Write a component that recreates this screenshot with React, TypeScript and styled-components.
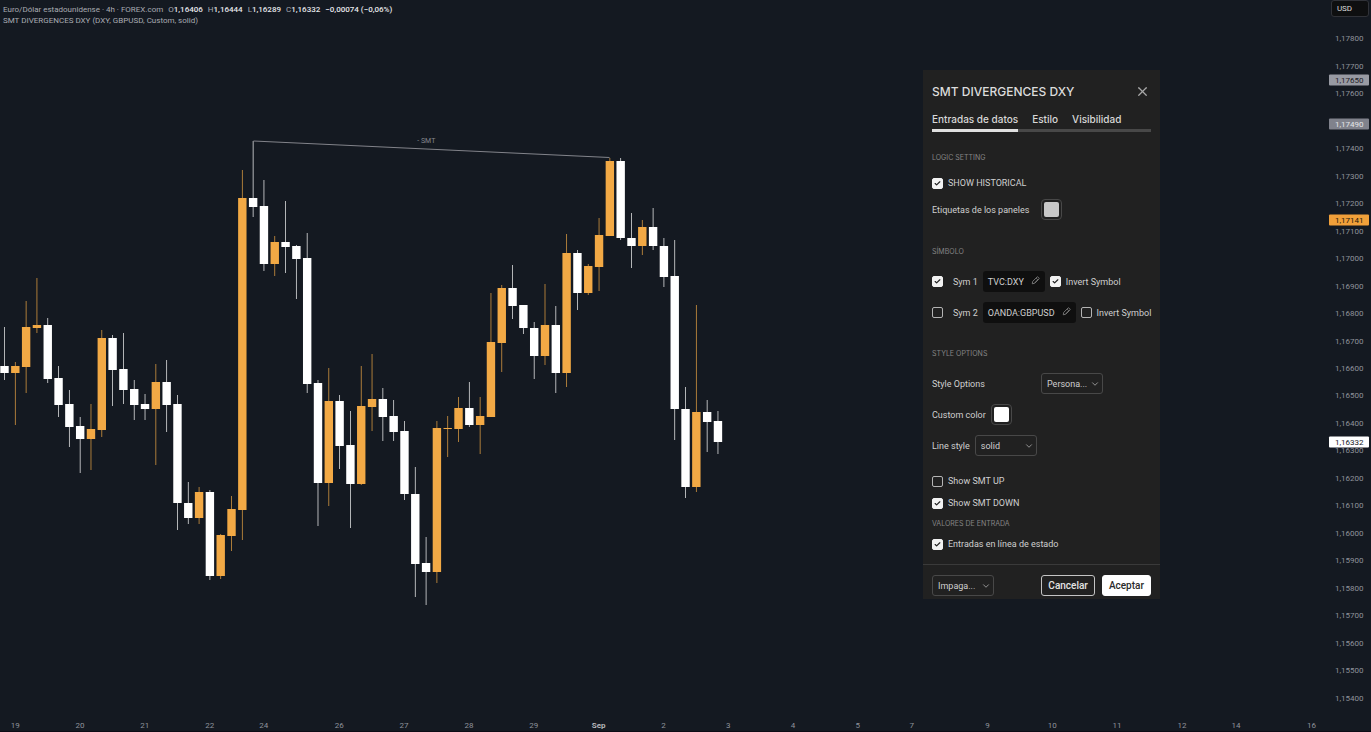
import React from "react";
import styled, { createGlobalStyle } from "styled-components";
import { Check, ChevronDown, X } from "lucide-react";

const display = `Inter, "Liberation Sans", sans-serif`;
const compact = `Roboto, "Liberation Sans", sans-serif`;

const GlobalStyle = createGlobalStyle`
  *, *::before, *::after { box-sizing: border-box; }
  html, body, #root { height: 100%; }
  body {
    margin: 0;
    background: #141921;
    color: #d6d6d6;
    font-family: ${compact};
    overflow: hidden;
  }
  button, select, input { font: inherit; color: inherit; margin: 0; }
`;

/* ---------- data ---------- */

type Candle = [kind: "up" | "down", high: number, top: number, bottom: number, low: number];

const candles: Candle[] = [
  ["down", 327, 366, 373, 380], ["up", 362, 366, 373, 425], ["up", 301, 327, 367, 393],
  ["up", 278, 325, 328, 333], ["down", 318, 325, 379, 383], ["down", 366, 378, 405, 417],
  ["down", 390, 404, 427, 447], ["down", 417, 426, 439, 473], ["up", 404, 429, 439, 470],
  ["up", 330, 338, 430, 437], ["down", 335, 338, 370, 406], ["down", 333, 369, 390, 404],
  ["down", 380, 389, 405, 420], ["down", 394, 404, 409, 420], ["up", 364, 382, 409, 465],
  ["down", 360, 382, 405, 432], ["down", 395, 404, 503, 530], ["down", 482, 503, 518, 524],
  ["up", 487, 492, 518, 524], ["down", 490, 492, 576, 580], ["up", 534, 535, 576, 579],
  ["up", 496, 509, 536, 551], ["up", 170, 198, 510, 540], ["down", 141, 198, 207, 217],
  ["down", 180, 206, 264, 271], ["up", 236, 242, 264, 276], ["down", 201, 242, 247, 273],
  ["down", 245, 246, 259, 299], ["down", 233, 258, 384, 393], ["down", 380, 383, 483, 526],
  ["up", 368, 401, 483, 506], ["down", 395, 401, 446, 469], ["down", 411, 445, 484, 528],
  ["up", 366, 406, 484, 485], ["up", 354, 399, 407, 431], ["down", 388, 399, 417, 441],
  ["down", 400, 416, 432, 441], ["down", 421, 431, 494, 500], ["down", 467, 494, 564, 597],
  ["down", 537, 563, 572, 605], ["up", 421, 428, 572, 583], ["up", 416, 428, 429, 457],
  ["up", 397, 408, 429, 442], ["down", 382, 408, 425, 427], ["up", 397, 416, 425, 454],
  ["up", 293, 342, 417, 417], ["up", 285, 288, 343, 372], ["down", 265, 288, 306, 319],
  ["down", 305, 305, 328, 334], ["down", 322, 328, 356, 379], ["up", 284, 325, 356, 365],
  ["down", 306, 325, 373, 393], ["up", 234, 253, 373, 387], ["down", 250, 253, 293, 310],
  ["up", 264, 266, 293, 295], ["up", 218, 235, 267, 291], ["up", 158, 161, 236, 236],
  ["down", 158, 161, 238, 240], ["down", 213, 238, 246, 268], ["up", 220, 227, 246, 255],
  ["down", 208, 227, 246, 250], ["down", 238, 246, 277, 287], ["down", 240, 276, 409, 440],
  ["down", 387, 409, 487, 498], ["up", 305, 412, 487, 492], ["down", 400, 412, 422, 452],
  ["down", 411, 421, 442, 454],
];

const BAR_PITCH = 10.81;
const FIRST_BAR = 4.5;

const timeLabels: [bar: number, text: string][] = [
  [1, "19"], [7, "20"], [13, "21"], [19, "22"], [24, "24"], [31, "26"], [37, "27"],
  [43, "28"], [49, "29"], [55, "Sep"], [61, "2"], [67, "3"], [73, "4"], [79, "5"],
  [84, "7"], [91, "9"], [97, "10"], [103, "11"], [109, "12"], [114, "14"], [121, "16"],
];

const TOP_PRICE = 117800;
const PRICE_STEP = 100;
const ROWS = 25;
const prices = Array.from({ length: ROWS }, (_, i) => TOP_PRICE - i * PRICE_STEP);
const formatPrice = (p: number) => `1,${String(p).slice(1)}`;

const priceTags = [
  { price: 117650, bg: "#989aa3", fg: "#1d2026" },
  { price: 117490, bg: "#80828c", fg: "#e4e5e8" },
  { price: 117141, bg: "#f1a03a", fg: "#241a0c" },
  { price: 116332, bg: "#ffffff", fg: "#15181f" },
];

/* ---------- chart ---------- */

const Page = styled.main`
  position: relative;
  display: grid;
  grid-template-columns: minmax(0, 1fr) 42px;
  grid-template-rows: minmax(0, 1fr) 19px;
  height: 100vh;
  border-bottom: 1px solid #0c0c16;
`;

const Plot = styled.section`
  position: relative;
  min-width: 0;
`;

const Drawing = styled.svg`
  display: block;
  width: 100%;
  height: 100%;
`;

const Legend = styled.header`
  position: absolute;
  top: 4px;
  left: 3px;
  font-size: 8px;
  line-height: 11px;
  color: #a9abb2;
  white-space: nowrap;
`;

const LegendLine = styled.div`
  display: flex;
  gap: 5px;
`;

const Figure = styled.b`
  font-weight: 500;
  color: #e6e7ea;
`;

const LineLabel = styled.span`
  position: absolute;
  left: 31.4%;
  top: 19%;
  font-size: 7px;
  line-height: 12px;
  color: #85878d;
`;

const PriceAxis = styled.aside`
  display: flex;
  flex-direction: column;
  font-size: 8px;
  color: #8f929b;
`;

const Currency = styled.button`
  align-self: flex-start;
  width: 38px;
  height: 17px;
  margin: 0 0 8px 2px;
  padding: 0 11px 0 0;
  border: 1px solid #303238;
  border-radius: 3px;
  background: #0e0f10;
  color: #dcdcdc;
  font-size: 8px;
`;

const PriceRows = styled.div`
  position: relative;
  flex: 1;
  display: grid;
  grid-template-rows: repeat(${ROWS}, minmax(0, 1fr));
`;

const Price = styled.span`
  display: flex;
  align-items: center;
  padding-left: 6px;
`;

const PriceTag = styled.span<{ $bg: string; $fg: string }>`
  position: absolute;
  left: 0;
  width: 40px;
  height: 11px;
  padding-left: 6px;
  border-radius: 1px;
  transform: translateY(-50%);
  line-height: 11px;
  background: ${(p) => p.$bg};
  color: ${(p) => p.$fg};
`;

const TimeAxis = styled.footer`
  grid-column: 1 / -1;
  display: grid;
  grid-template-columns: repeat(127, minmax(0, 1fr));
  margin-left: -1px;
  padding-top: 9px;
  font-size: 8px;
  line-height: 10px;
  color: #8f929b;
`;

const TimeLabel = styled.span<{ $bar: number; $strong: boolean }>`
  grid-row: 1;
  grid-column: ${(p) => p.$bar + 1};
  display: flex;
  justify-content: center;
  font-weight: ${(p) => (p.$strong ? 700 : 400)};
  color: ${(p) => (p.$strong ? "#b4b6bc" : "inherit")};
`;

/* ---------- dialog ---------- */

const Dialog = styled.form`
  position: absolute;
  top: 70px;
  right: 211px;
  width: 237px;
  background: #212121;
  color: #cfcfcf;
  font-size: 9px;
  line-height: 12px;
`;

const DialogHeader = styled.div`
  display: flex;
  align-items: center;
  justify-content: space-between;
  height: 42px;
  padding: 1px 10px 0 9px;
`;

const Title = styled.h1`
  margin: 0;
  font-family: ${display};
  font-size: 12px;
  line-height: 16px;
  font-weight: 500;
  color: #dcdcdc;
`;

const CloseButton = styled.button`
  display: flex;
  padding: 0;
  border: 0;
  background: none;
  color: #a8a8a8;
`;

const Tabs = styled.nav`
  display: flex;
  gap: 14px;
  margin: 0 9px;
  border-bottom: 3px solid #484848;
`;

const Tab = styled.button<{ $active?: boolean }>`
  height: 20px;
  margin-bottom: -3px;
  padding: 0 0 3px;
  border: 0;
  border-bottom: 3px solid ${(p) => (p.$active ? "#e0e0e0" : "transparent")};
  background: none;
  font-family: ${display};
  font-size: 10px;
  line-height: 12px;
  font-weight: 500;
  color: #d8d8d8;
`;

const Section = styled.section<{ $gap?: number }>`
  margin-top: ${(p) => p.$gap ?? 13}px;
  padding: 0 9px;
`;

const Heading = styled.h2<{ $tight?: boolean }>`
  margin: ${(p) => (p.$tight ? "0" : "0 0 2px")};
  font-family: ${display};
  font-size: 7px;
  line-height: ${(p) => (p.$tight ? "19px" : "25px")};
  font-weight: 400;
  color: #858585;
`;

const Row = styled.div<{ $tall?: boolean }>`
  display: flex;
  align-items: center;
  gap: 5px;
  height: ${(p) => (p.$tall ? "31px" : "22px")};
`;

const WideLabel = styled.label`
  width: 104px;
`;

const TickLabel = styled.label<{ $gap?: number }>`
  display: flex;
  align-items: center;
  gap: ${(p) => p.$gap ?? 5}px;
  white-space: nowrap;
`;

const TickFrame = styled.span`
  position: relative;
  display: flex;
  width: 11px;
  height: 11px;

  svg {
    position: absolute;
    inset: 2px;
    color: #202020;
    pointer-events: none;
    visibility: hidden;
  }
  input:checked + svg { visibility: visible; }
`;

const TickInput = styled.input`
  appearance: none;
  width: 11px;
  height: 11px;
  border: 1px solid #b4b4b4;
  border-radius: 2px;

  &:checked {
    border-color: #f2f2f2;
    background: #f2f2f2;
  }
`;

const Swatch = styled.button<{ $color: string }>`
  width: 21px;
  height: 21px;
  padding: 2px;
  border: 1px solid #484848;
  border-radius: 4px;
  background: none;

  &::before {
    content: "";
    display: block;
    height: 15px;
    border-radius: 2px;
    background: ${(p) => p.$color};
  }
`;

const SymbolButton = styled.button`
  display: flex;
  align-items: center;
  gap: 7px;
  height: 21px;
  padding: 0 5px;
  border: 0;
  border-radius: 3px;
  background: #0f0f0f;
  white-space: nowrap;

  svg { color: #8c8c8c; margin-top: -2px; }
`;

const SelectFrame = styled.span`
  position: relative;
  display: flex;
  width: 62px;

  svg {
    position: absolute;
    right: 3px;
    top: 6px;
    color: #a8a8a8;
    pointer-events: none;
  }
`;

const SelectInput = styled.select`
  appearance: none;
  width: 100%;
  height: 21px;
  padding: 0 12px 0 5px;
  border: 1px solid #484848;
  border-radius: 3px;
  background: transparent;
`;

const Actions = styled.div`
  display: flex;
  gap: 7px;
  height: 35px;
  margin-top: 9px;
  padding: 10px 9px 3px;
  border-top: 1px solid #3a3a3a;
`;

const ActionButton = styled.button<{ $primary?: boolean }>`
  height: 21px;
  padding: 0 6px;
  border: 1px solid ${(p) => (p.$primary ? "#ffffff" : "#c4c4c4")};
  border-radius: 3px;
  background: ${(p) => (p.$primary ? "#ffffff" : "transparent")};
  color: ${(p) => (p.$primary ? "#2a2a2a" : "#e4e4e4")};
  font-size: 10px;
  line-height: 12px;
  font-weight: 500;

  &:first-of-type { margin-left: auto; }
`;

function Tick({ label, checked, gap }: { label: string; checked?: boolean; gap?: number }) {
  return (
    <TickLabel $gap={gap}>
      <TickFrame>
        <TickInput type="checkbox" defaultChecked={checked} />
        <Check size={7} strokeWidth={4} />
      </TickFrame>
      {label}
    </TickLabel>
  );
}

function Select({ id, value, label }: { id: string; value: string; label?: string }) {
  return (
    <SelectFrame>
      <SelectInput id={id} aria-label={label}>
        <option>{value}</option>
      </SelectInput>
      <ChevronDown size={10} strokeWidth={2} />
    </SelectFrame>
  );
}

function Pencil() {
  return (
    <svg width="9" height="9" viewBox="0 0 18 18" fill="none" stroke="currentColor" strokeWidth="1.6">
      <path d="M2.5 15.5l.8-4.6L12 2.2a1.6 1.6 0 0 1 2.3 0l1.5 1.5a1.6 1.6 0 0 1 0 2.3L7.1 14.7z" />
      <path d="M10.5 4.5l3 3-6 6" />
    </svg>
  );
}

function SymbolRow({ n, symbol, checked }: { n: number; symbol: string; checked?: boolean }) {
  return (
    <Row $tall>
      <Tick label={`Sym ${n}`} gap={10} checked={checked} />
      <SymbolButton type="button">
        {symbol}
        <Pencil />
      </SymbolButton>
      <Tick label="Invert Symbol" checked={checked} />
    </Row>
  );
}

function Settings() {
  return (
    <Dialog role="dialog" aria-labelledby="title">
      <DialogHeader>
        <Title id="title">SMT DIVERGENCES DXY</Title>
        <CloseButton type="button" aria-label="Cerrar">
          <X size={15} strokeWidth={2} />
        </CloseButton>
      </DialogHeader>
      <Tabs>
        <Tab type="button" $active>Entradas de datos</Tab>
        <Tab type="button">Estilo</Tab>
        <Tab type="button">Visibilidad</Tab>
      </Tabs>
      <Section>
        <Heading>LOGIC SETTING</Heading>
        <Row><Tick label="SHOW HISTORICAL" checked /></Row>
        <Row $tall>
          <WideLabel htmlFor="panel-color">Etiquetas de los paneles</WideLabel>
          <Swatch id="panel-color" type="button" $color="#c8c8c8" />
        </Row>
      </Section>
      <Section $gap={14}>
        <Heading>SÍMBOLO</Heading>
        <SymbolRow n={1} symbol="TVC:DXY" checked />
        <SymbolRow n={2} symbol="OANDA:GBPUSD" />
      </Section>
      <Section>
        <Heading>STYLE OPTIONS</Heading>
        <Row $tall>
          <WideLabel htmlFor="style">Style Options</WideLabel>
          <Select id="style" value="Persona..." />
        </Row>
        <Row $tall>
          <label htmlFor="custom-color">Custom color</label>
          <Swatch id="custom-color" type="button" $color="#ffffff" />
        </Row>
        <Row $tall>
          <label htmlFor="line-style">Line style</label>
          <Select id="line-style" value="solid" />
        </Row>
      </Section>
      <Section $gap={9}>
        <Row><Tick label="Show SMT UP" /></Row>
        <Row><Tick label="Show SMT DOWN" checked /></Row>
        <Heading $tight>VALORES DE ENTRADA</Heading>
        <Row><Tick label="Entradas en línea de estado" checked /></Row>
      </Section>
      <Actions>
        <Select id="defaults" value="Impaga..." label="Valores predeterminados" />
        <ActionButton type="button">Cancelar</ActionButton>
        <ActionButton type="button" $primary>Aceptar</ActionButton>
      </Actions>
    </Dialog>
  );
}

export default function App() {
  return (
    <>
      <GlobalStyle />
      <Page>
        <Plot>
          <Drawing viewBox="0 0 1329 712" preserveAspectRatio="none" aria-label="EURUSD 4h">
            {candles.map(([kind, high, top, bottom, low], i) => {
              const x = FIRST_BAR + i * BAR_PITCH;
              const fill = kind === "up" ? "#f2a945" : "#ffffff";
              return (
                <g key={i} fill={fill}>
                  <rect x={x - 0.4} y={high} width={0.8} height={low - high} opacity={0.85} />
                  <rect x={x - 4.2} y={top} width={8.4} height={bottom - top} />
                </g>
              );
            })}
            <line x1="253.5" y1="141" x2="609.5" y2="157.5" stroke="#8e9096" strokeWidth="0.9" />
          </Drawing>
          <LineLabel>- SMT</LineLabel>
          <Legend>
            <LegendLine>
              <span>Euro/Dólar estadounidense · 4h · FOREX.com</span>
              <span>O<Figure>1,16406</Figure></span>
              <span>H<Figure>1,16444</Figure></span>
              <span>L<Figure>1,16289</Figure></span>
              <span>C<Figure>1,16332</Figure></span>
              <Figure>−0,00074 (−0,06%)</Figure>
            </LegendLine>
            <LegendLine>SMT DIVERGENCES DXY (DXY, GBPUSD, Custom, solid)</LegendLine>
          </Legend>
        </Plot>
        <PriceAxis>
          <Currency type="button">USD</Currency>
          <PriceRows>
            {prices.map((p) => (
              <Price key={p}>{formatPrice(p)}</Price>
            ))}
            {priceTags.map(({ price, bg, fg }) => (
              <PriceTag
                key={price}
                $bg={bg}
                $fg={fg}
                style={{ top: `${(((TOP_PRICE - price) / PRICE_STEP + 0.5) / ROWS) * 100}%` }}
              >
                {formatPrice(price)}
              </PriceTag>
            ))}
          </PriceRows>
        </PriceAxis>
        <TimeAxis>
          {timeLabels.map(([bar, text]) => (
            <TimeLabel key={bar} $bar={bar} $strong={text === "Sep"}>{text}</TimeLabel>
          ))}
        </TimeAxis>
        <Settings />
      </Page>
    </>
  );
}
